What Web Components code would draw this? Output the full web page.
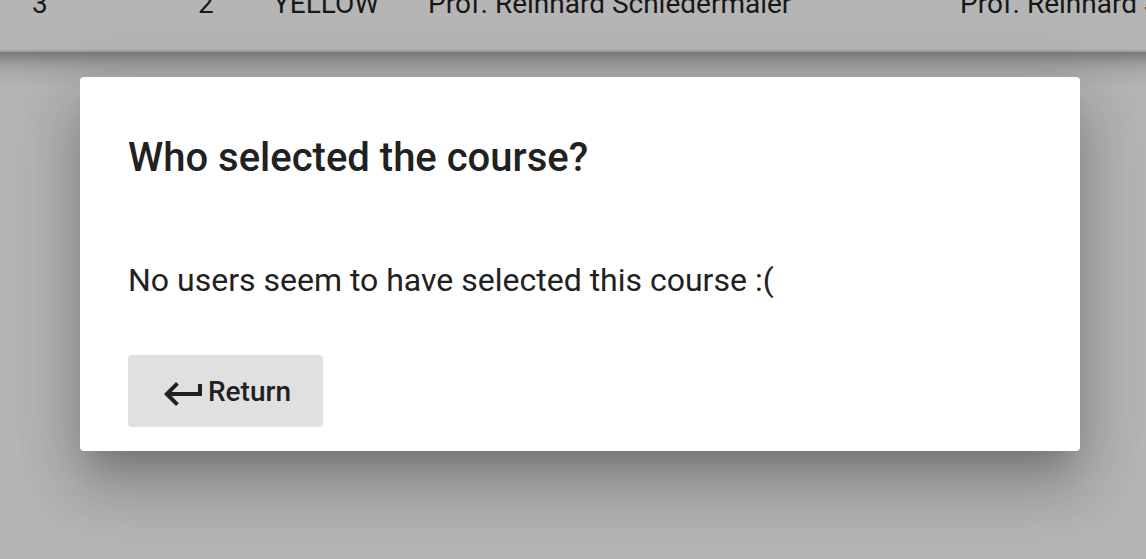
<!DOCTYPE html>
<html lang="en">
<head>
<meta charset="utf-8">
<title>Course selection</title>
<style>
html, body { height: 100%; margin: 0; }
body { background: #b5b5b5; color: #212121; font-family: Roboto, "Liberation Sans", sans-serif; overflow: hidden; }
</style>
</head>
<body>
<course-page>
  <course-table slot="table"></course-table>
  <message-dialog>
    <span slot="title">Who selected the course?</span>
    No users seem to have selected this course :(
    <return-button slot="actions">Return</return-button>
  </message-dialog>
</course-page>
<script>
class BaseElement extends HTMLElement {
  constructor() {
    super();
    this.attachShadow({ mode: "open" }).innerHTML = this.constructor.markup;
  }
}

class CoursePage extends BaseElement {
  static markup = `
    <style>
      :host { display: block; }
      main { padding: 25px 66px 0 80px; }
    </style>
    <slot name="table"></slot>
    <main><slot></slot></main>`;
}

class CourseTable extends BaseElement {
  static markup = `
    <style>
      :host {
        display: flex; flex-direction: column; justify-content: flex-end;
        height: 50px; margin: 0 -48px; padding: 0 48px;
        border-bottom: 2px solid #9f9f9f; background: #b5b5b5;
        box-shadow: 0 8px 10px -4px rgba(0,0,0,.2), 0 14px 20px 2px rgba(0,0,0,.14), 0 4px 30px 2px rgba(0,0,0,.12);
      }
      table { flex: none; width: 100%; table-layout: fixed; border-collapse: collapse; }
      td { height: 92px; padding: 0 0 0 32px; font-size: 28px; line-height: 32px; color: #171717; white-space: nowrap; }
      .semester { width: 134px; }
      .group { width: 43px; }
      .color { width: 123px; }
      .lecturer { width: 500px; }
    </style>
    <table><tbody><tr>
      <td class="semester">3</td><td class="group">2</td><td class="color">YELLOW</td>
      <td class="lecturer">Prof. Reinhard Schiedermaier</td><td>Prof. Reinhard Schiedermaier</td>
    </tr></tbody></table>`;
}

class MessageDialog extends BaseElement {
  static markup = `
    <style>
      :host {
        display: block; position: relative; box-sizing: border-box; padding: 48px 48px 24px;
        background: #fff; border-radius: 4px;
        box-shadow: 0 22px 30px -14px rgba(0,0,0,.2), 0 40px 62px 4px rgba(0,0,0,.14), 0 16px 68px 12px rgba(0,0,0,.12);
      }
      h2 { margin: 0; font-size: 40px; line-height: 66px; font-weight: 500; }
      p { margin: 62px 0 48px; font-size: 32px; line-height: 54px; }
    </style>
    <section role="dialog" aria-labelledby="title">
      <h2 id="title"><slot name="title"></slot></h2>
      <p><slot></slot></p>
      <slot name="actions"></slot>
    </section>`;
}

class ReturnButton extends BaseElement {
  static markup = `
    <style>
      :host { display: block; }
      button {
        display: flex; align-items: center; height: 72px; margin: 0; padding: 2px 32px 0;
        border: 0; border-radius: 4px; background: #e0e0e0; color: #212121;
        font: 500 28px/36px Roboto, "Liberation Sans", sans-serif; cursor: pointer;
      }
      svg { width: 48px; height: 48px; margin-top: 4px; fill: currentColor; }
    </style>
    <button type="button">
      <svg viewBox="0 0 24 24" aria-hidden="true"><path d="M19 7v4H5.83l3.58-3.59L8 6l-6 6 6 6 1.41-1.41L5.83 13H21V7z"/></svg>
      <slot></slot>
    </button>`;
}

customElements.define("course-page", CoursePage);
customElements.define("course-table", CourseTable);
customElements.define("message-dialog", MessageDialog);
customElements.define("return-button", ReturnButton);
</script>
</body>
</html>
